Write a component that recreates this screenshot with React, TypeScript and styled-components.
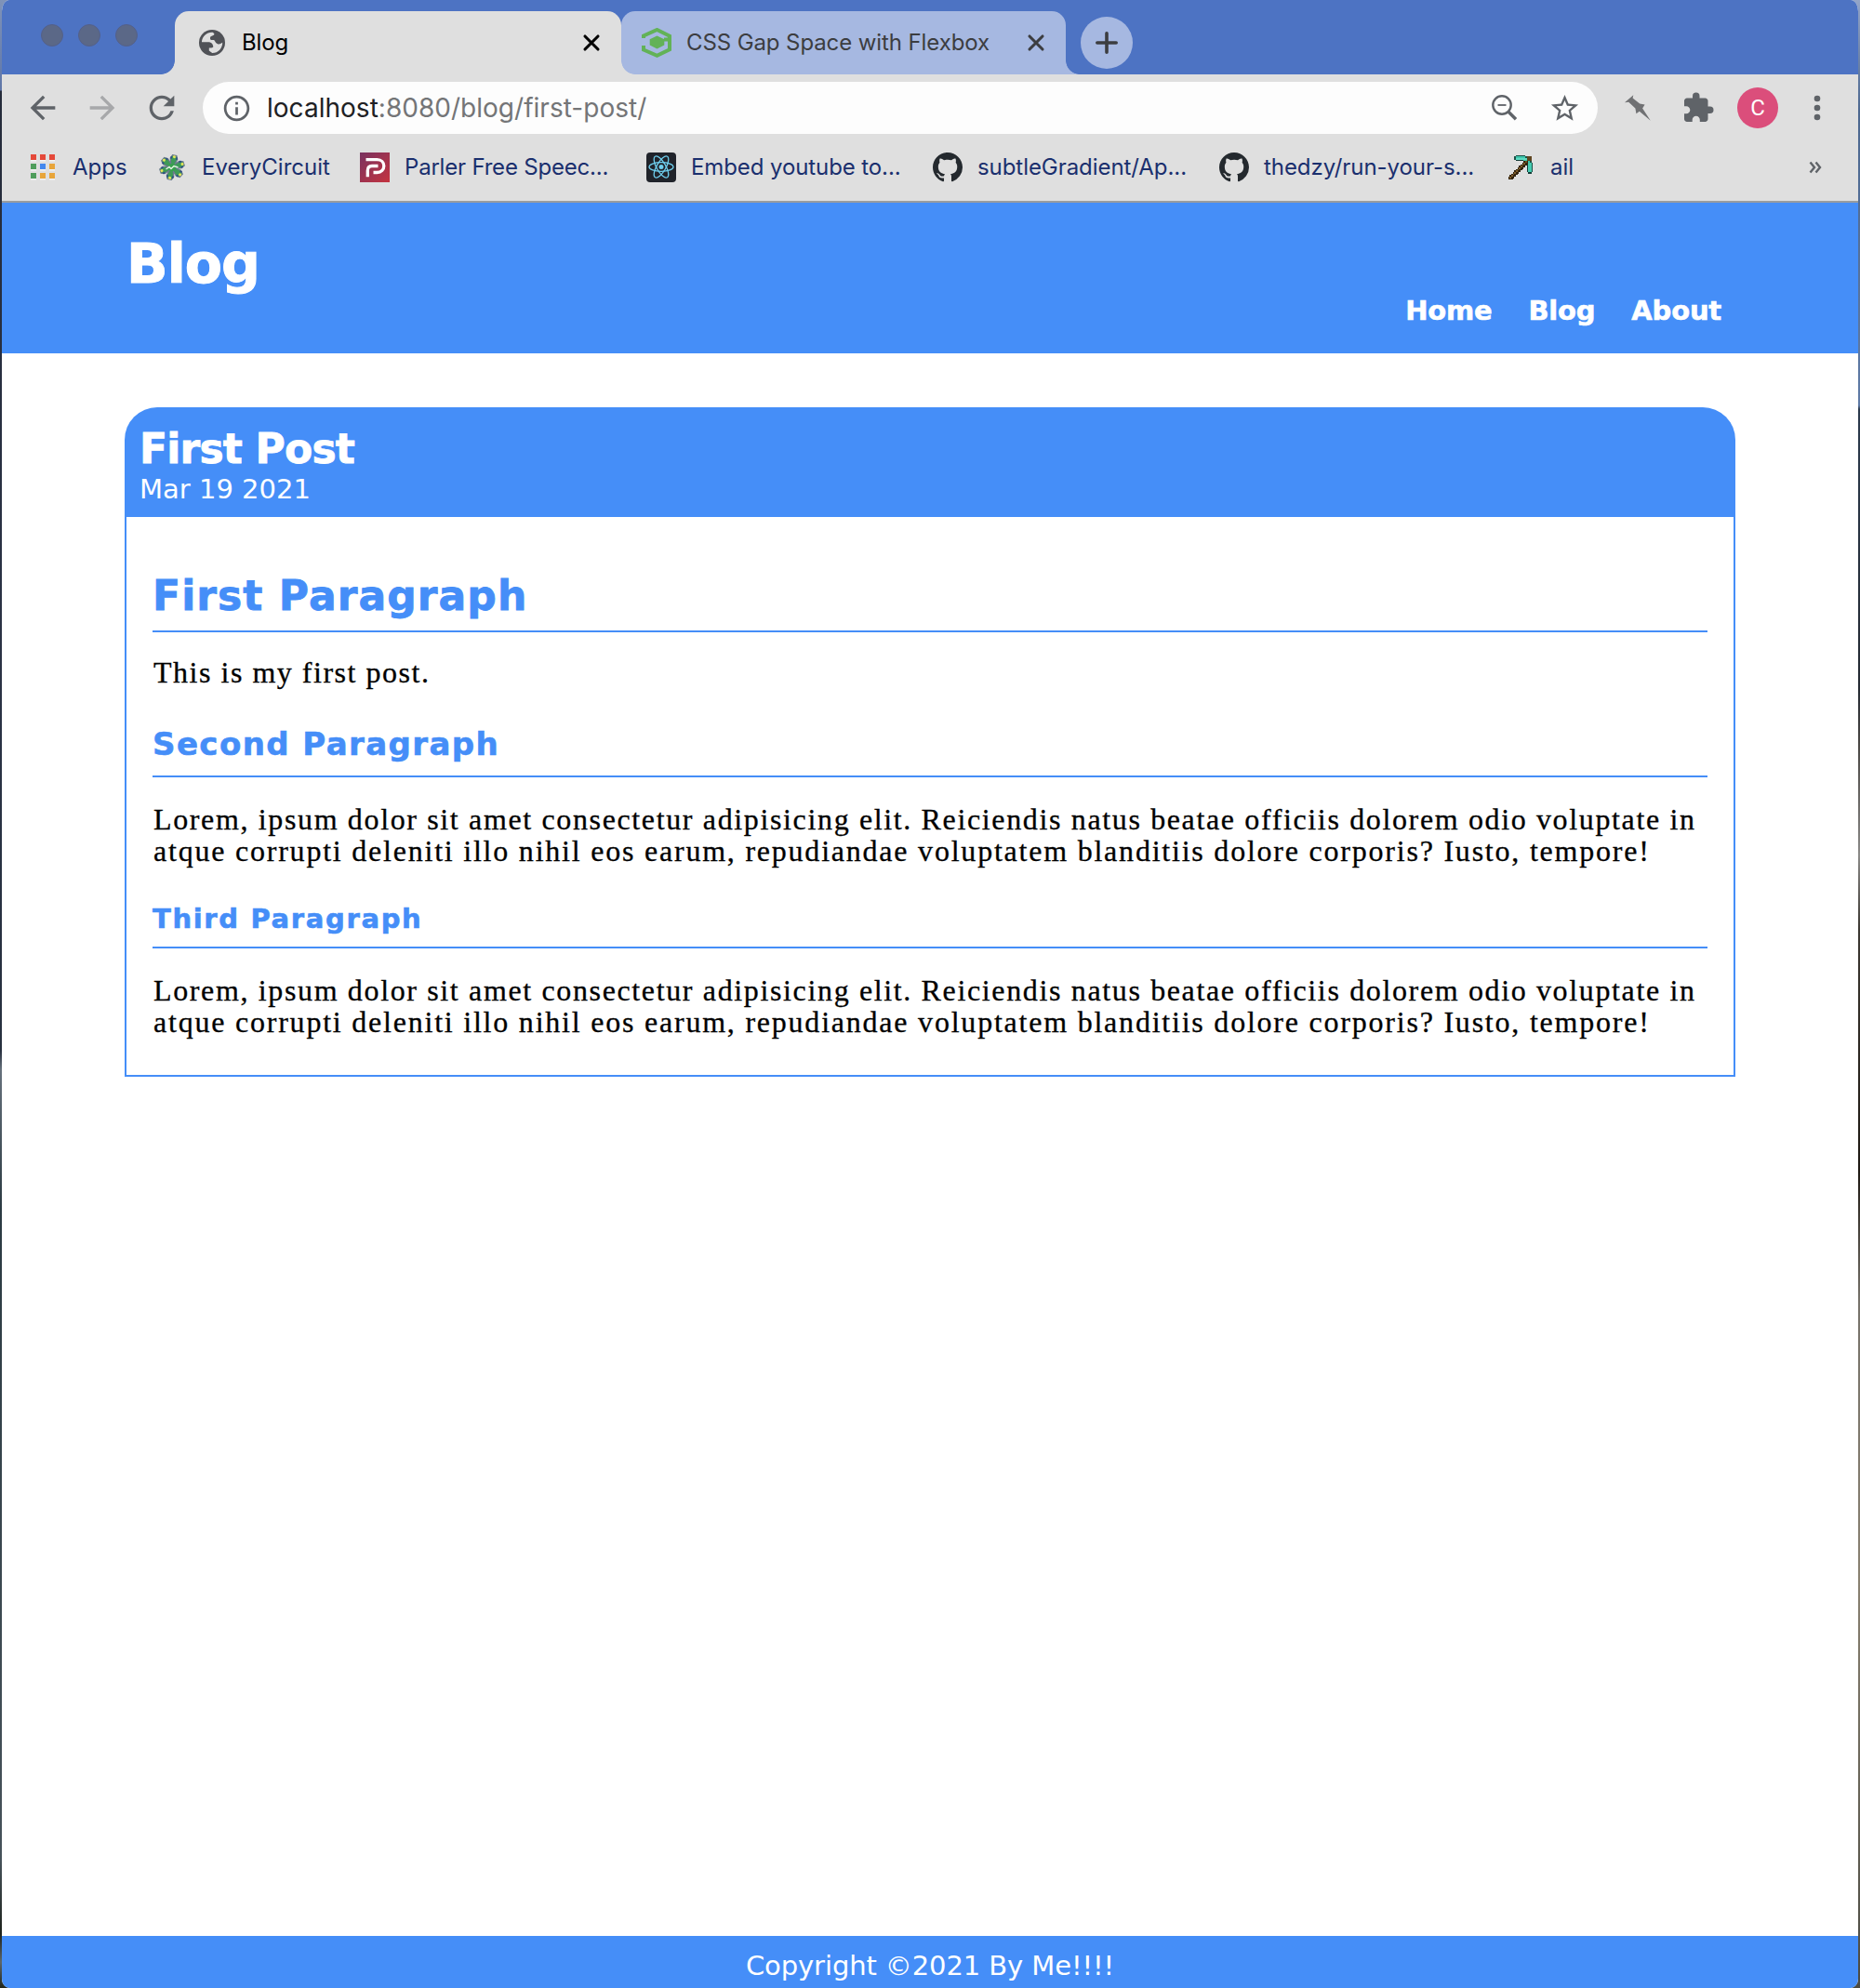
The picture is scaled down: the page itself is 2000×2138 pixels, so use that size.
import React from "react";
import styled, { createGlobalStyle, css } from "styled-components";
import {
  MdArrowBack,
  MdArrowForward,
  MdExtension,
  MdOutlineInfo,
  MdRefresh,
  MdStarBorder,
} from "react-icons/md";

const color = {
  frame: "#4d73c3",
  tabIdle: "#a6b8e1",
  chrome: "#dfdfdf",
  icon: "#5f6368",
  link: "#1a2f6e",
  blue: "#458ef8",
};

const uiFont = 'Inter, Roboto, "Liberation Sans", sans-serif';
const sansFont = '"DejaVu Sans", Verdana, sans-serif';
const serifFont = '"Liberation Serif", Georgia, serif';

const GlobalStyle = createGlobalStyle`
  * { box-sizing: border-box; }
  body { margin: 0; background: #fff; }
  h1, h2, h3, h4, p { margin: 0; }
`;

/* ---------- window ---------- */

const Desktop = styled.div`
  width: 2000px;
  height: 2138px;
  padding: 0 2px;
  overflow: hidden;
  background:
    linear-gradient(#7f93b8 0, #5f76a8 97px, #252b3a 98px, #2b3245 700px, #27303f 1130px, #66717c 1150px, #2b3a42 1300px, #46525a 2000px, #1e231d 2080px, #5e676a 2110px, #20251b 2138px) 0 0 / 50% 100% no-repeat,
    linear-gradient(#93a5c8 0, #4c678f 120px, #5f7ba6 436px, #2c3a4d 440px, #252b33 740px, #4a4744 800px, #8b8a88 920px, #3c3832 1000px, #1f1a14 1260px, #77736b 1400px, #8a8272 1700px, #4a4a42 2138px) 100% 0 / 50% 100% no-repeat;
`;

const Window = styled.div`
  display: flex;
  flex-direction: column;
  height: 100%;
  overflow: hidden;
  background: #fff;
  border-radius: 8px 8px 8px 8px / 12px 12px 10px 10px;
`;

/* ---------- tab strip ---------- */

const TabStrip = styled.div`
  display: flex;
  flex: none;
  align-items: flex-end;
  height: 80px;
  background: ${color.frame};
`;

const Lights = styled.div`
  display: flex;
  gap: 16px;
  width: 186px;
  padding: 0 0 30px 42px;
`;

const Light = styled.span`
  width: 24px;
  height: 24px;
  border: 1px solid #53608a;
  border-radius: 50%;
  background: #5b6887;
`;

const Tab = styled.div<{ $active?: boolean; $width: number }>`
  position: relative;
  z-index: ${(p) => (p.$active ? 2 : 1)};
  display: flex;
  align-items: center;
  width: ${(p) => p.$width}px;
  height: 68px;
  padding: 0 22px 0 ${(p) => (p.$active ? 26 : 22)}px;
  border-radius: 15px 15px 0 0;
  background: ${(p) => (p.$active ? color.chrome : color.tabIdle)};
  color: ${(p) => (p.$active ? "#000" : "#3c3d40")};
  font: 400 24px/32px ${uiFont};

  &::after {
    content: "";
    position: absolute;
    left: 100%;
    bottom: 0;
    width: 15px;
    height: 15px;
    background: radial-gradient(circle at 100% 0, transparent 14.5px, ${(p) => (p.$active ? color.chrome : color.tabIdle)} 15.2px);
  }

  ${(p) =>
    p.$active &&
    css`
      &::before {
        content: "";
        position: absolute;
        right: 100%;
        bottom: 0;
        width: 15px;
        height: 15px;
        background: radial-gradient(circle at 0 0, transparent 14.5px, ${color.chrome} 15.2px);
      }
    `}
`;

const TabTitle = styled.span<{ $gap: number }>`
  flex: 1;
  margin-left: ${(p) => p.$gap}px;
  letter-spacing: -0.1px;
  white-space: nowrap;
`;

const NewTab = styled.div`
  display: flex;
  align-items: center;
  justify-content: center;
  width: 56px;
  height: 56px;
  margin: 0 0 6px 16px;
  border-radius: 50%;
  background: ${color.tabIdle};
`;

/* ---------- toolbar ---------- */

const Toolbar = styled.div`
  display: flex;
  flex: none;
  align-items: center;
  height: 72px;
  padding-left: 24px;
  background: ${color.chrome};
  color: ${color.icon};
`;

const NavButtons = styled.div`
  display: flex;
  gap: 24px;
  width: 192px;
`;

const NavButton = styled.span<{ $muted?: boolean }>`
  display: flex;
  color: ${(p) => (p.$muted ? "#a7a8aa" : color.icon)};
`;

const AddressBar = styled.div`
  display: flex;
  align-items: center;
  width: 1500px;
  height: 56px;
  padding: 0 18px 0 20px;
  border-radius: 28px;
  background: #fdfdfd;
`;

const Url = styled.span`
  flex: 1;
  margin-left: 16px;
  color: #747577;
  font: 400 28px/36px ${uiFont};
  letter-spacing: 0.02px;
`;

const Host = styled.span`
  color: #202124;
`;

const AddressActions = styled.div`
  display: flex;
  align-items: center;
  gap: 33px;
`;

const Actions = styled.div`
  display: flex;
  align-items: center;
  padding-left: 28px;
`;

const PinSlot = styled.span`
  display: flex;
  width: 62px;
`;

const ExtensionSlot = styled.span`
  display: flex;
  width: 60px;
`;

const Avatar = styled.span`
  width: 44px;
  height: 44px;
  margin-right: 38px;
  border-radius: 50%;
  background: #db4e7b;
  color: #fff;
  font: 400 24px/44px Roboto, sans-serif;
  text-align: center;
`;

/* ---------- bookmarks ---------- */

const BookmarkBar = styled.div`
  display: flex;
  flex: none;
  align-items: center;
  height: 66px;
  padding: 0 39px 8px 27px;
  border-bottom: 2px solid #999c9f;
  background: ${color.chrome};
  color: ${color.link};
  font: 400 24px/32px ${uiFont};
`;

const Bookmark = styled.div<{ $width: number; $tracking?: number }>`
  display: flex;
  align-items: center;
  gap: 16px;
  width: ${(p) => p.$width}px;
  letter-spacing: ${(p) => p.$tracking ?? 0}px;
  white-space: nowrap;

  svg {
    flex: none;
  }
`;

const Overflow = styled.span`
  display: flex;
  margin-left: auto;
`;

/* ---------- blog page ---------- */

const SiteHeader = styled.header`
  display: flex;
  flex: none;
  flex-direction: column;
  height: 162px;
  padding: 33px 147px 0 134px;
  background: ${color.blue};
  color: #fff;
  font-family: ${sansFont};
`;

const SiteTitle = styled.h1`
  font-size: 58.6px;
  line-height: 66px;
  letter-spacing: -1px;
  -webkit-text-stroke: 1px currentColor;
`;

const SiteNav = styled.nav`
  display: flex;
  justify-content: flex-end;
  gap: 39px;
  font-size: 29px;
  font-weight: 700;
  line-height: 34px;
  letter-spacing: -0.2px;
  -webkit-text-stroke: 0.6px currentColor;
`;

const Main = styled.main`
  flex: 1;
  padding: 58px 132px 0;
`;

const PostHeader = styled.header`
  padding: 20px 16px 12px;
  border-radius: 35px 35px 0 0;
  background: ${color.blue};
  color: #fff;
  font-family: ${sansFont};
`;

const PostTitle = styled.h2`
  font-size: 44px;
  line-height: 50px;
  letter-spacing: -0.8px;
  -webkit-text-stroke: 0.8px currentColor;
`;

const PostDate = styled.div`
  font-size: 29px;
  line-height: 36px;
`;

const PostBody = styled.div`
  padding: 59px 28px 40px;
  border: 2px solid ${color.blue};
  border-top: 0;
`;

const sizes = {
  large: css`
    padding-bottom: 11px;
    margin-bottom: 26px;
    font-size: 44px;
    line-height: 52px;
    letter-spacing: 1.07px;
    -webkit-text-stroke: 0.8px currentColor;
  `,
  medium: css`
    padding-bottom: 14px;
    margin: 40px 0 28px;
    font-size: 34px;
    line-height: 40px;
    letter-spacing: 1.4px;
    -webkit-text-stroke: 0.6px currentColor;
  `,
  small: css`
    padding-bottom: 13px;
    margin: 39px 0 28px;
    font-size: 29px;
    line-height: 34px;
    letter-spacing: 1.66px;
    -webkit-text-stroke: 0.6px currentColor;
  `,
};

const Heading = styled.h3<{ $size: keyof typeof sizes }>`
  border-bottom: 2px solid ${color.blue};
  color: ${color.blue};
  font-family: ${sansFont};
  ${(p) => sizes[p.$size]}
`;

const Paragraph = styled.p`
  padding-left: 1px;
  color: #000;
  font: 400 32px/34px ${serifFont};
  letter-spacing: 1.52px;
  -webkit-text-stroke: 0.3px #000;
`;

const Line = styled.span<{ $tracking: number }>`
  display: block;
  letter-spacing: ${(p) => p.$tracking}px;
  white-space: nowrap;
`;

const SiteFooter = styled.footer`
  flex: none;
  height: 56px;
  padding-top: 14px;
  background: ${color.blue};
  color: #fff;
  font: 400 29px/36px ${sansFont};
  letter-spacing: -0.1px;
  text-align: center;
`;

/* ---------- icons ---------- */

const GlobeIcon = () => (
  <svg width="28" height="28" viewBox="0 0 28 28">
    <circle cx="14" cy="14" r="14" fill="#505257" />
    <path
      fill={color.chrome}
      d="M15 2.9C8.6 2.4 3.4 6.800 2.900 13.200H9.800C12.800 13.200 15.200 15 15.300 18.400C13.900 19.600 12.300 19.300 10.800 19.500V22.400L14.200 25.100C20.500 25.200 25.300 20 25.200 13.800C23.700 14.700 22.400 15.900 20.500 15.500C18.300 15 17.900 13.200 16.400 11.300C15.500 10.700 13.600 11.500 12.500 10.700C11.700 9.800 11.800 8.100 12.600 7.300C13.900 6.400 15.900 6.500 16.400 5.100C16.600 4.100 15.800 3.400 15 2.900Z"
    />
  </svg>
);

const CloseIcon = () => (
  <svg width="20" height="20" viewBox="0 0 20 20" stroke="currentColor" strokeWidth="3.1" strokeLinecap="round">
    <path d="M3 3L17 17M17 3L3 17" />
  </svg>
);

const HexIcon = () => (
  <svg width="32" height="32" viewBox="0 0 32 32" fill="none">
    <path d="M2 11V8.500L16.500 2L30 8.800V12.500H24" stroke="#62b257" strokeWidth="4" />
    <path d="M2 19V23.500L16.500 29.800L30 23.300V12" stroke="#62b257" strokeWidth="4" />
    <path d="M16.500 8.500L24.300 12.300V18.500L16.500 22.500L8.700 18.500V12.300Z" fill="#62b257" />
  </svg>
);

const PlusIcon = () => (
  <svg width="26" height="26" viewBox="0 0 26 26" stroke="#3c3d40" strokeWidth="3.6" strokeLinecap="round">
    <path d="M13 2.800V23.200M2.800 13H23.200" />
  </svg>
);

const ZoomOutIcon = () => (
  <svg width="28" height="28" viewBox="0 0 28 28" fill="none" stroke={color.icon}>
    <circle cx="11" cy="11" r="9.700" strokeWidth="2.400" />
    <path d="M6.500 11H15.500" strokeWidth="1.800" />
    <path d="M18 18.200L26 26.200" strokeWidth="3.400" />
  </svg>
);

const PinIcon = () => (
  <svg width="30" height="30" viewBox="0 0 30 30" fill="#707173">
    <path d="M10.300 1.200L9.600 4.600L17.200 10.600L22.600 11.400L20.100 15.400L28.800 28.800L16.800 18.700L13.400 21.200L12.400 15.500L5.200 8.800L1 9.300Z" />
  </svg>
);

const MoreIcon = () => (
  <svg width="8" height="28" viewBox="0 0 8 28" fill={color.icon}>
    <circle cx="4" cy="4" r="3.300" />
    <circle cx="4" cy="14" r="3.300" />
    <circle cx="4" cy="24" r="3.300" />
  </svg>
);

const appColors = ["#e5493a", "#e5493a", "#e5493a", "#4f9d5b", "#4488ee", "#e8a53a", "#4f9d5b", "#e8a53a", "#e8a53a"];

const AppsIcon = () => (
  <svg width="33" height="32" viewBox="0 0 33 32">
    {appColors.map((fill, i) => (
      <g key={i} transform={`translate(${4 + (i % 3) * 10} ${2 + Math.floor(i / 3) * 10})`}>
        <rect y="1" width="6" height="6.500" fill="#f3f3f3" />
        <rect width="6" height="6" fill={fill} />
      </g>
    ))}
  </svg>
);

const CircuitIcon = () => (
  <svg width="32" height="32" viewBox="0 0 32 32">
    {[12, 72, 132, 192, 252, 312].map((angle) => (
      <g key={angle} transform={`rotate(${angle} 16 16)`}>
        <path d="M14.500 15L12.200 6.500L13.800 2.800H18.200L19.800 6.500L17.500 15Z" fill="#3f9a58" stroke="#6b7a8c" strokeWidth="1.200" />
        <path d="M13 7V4.500M19 7V4.500" stroke="#2c4c86" strokeWidth="1.600" />
        <circle cx="16" cy="4.400" r="1.500" fill="#e9e75a" />
      </g>
    ))}
    <circle cx="16" cy="16" r="4" fill="#37a04c" />
    <path d="M9.500 18L13 15.500L15 17.500L18 14.500L22.500 16" stroke="#e3f3e4" strokeWidth="1.400" fill="none" />
  </svg>
);

const ParlerIcon = () => (
  <svg width="32" height="32" viewBox="0 0 32 32" fill="none">
    <defs>
      <linearGradient id="parler" x1="0" y1="0" x2="1" y2="1">
        <stop offset="0" stopColor="#78325f" />
        <stop offset="1" stopColor="#c5343f" />
      </linearGradient>
    </defs>
    <rect width="32" height="32" fill="url(#parler)" />
    <path d="M6.500 7.600H18.500C23 7.600 25.800 10.800 25.800 14.500S23 21.500 18.500 21.500H14.500" stroke="#fff" strokeWidth="3.300" />
    <path d="M8.300 26.300V19.500C8.300 16.400 10 14.500 13 14.500H19.500" stroke="#fff" strokeWidth="3.300" />
  </svg>
);

const ReactIcon = () => (
  <svg width="32" height="32" viewBox="0 0 32 32" fill="none">
    <rect width="32" height="32" rx="4" fill="#20232a" />
    {[0, 60, 120].map((angle) => (
      <ellipse key={angle} cx="16" cy="15.500" rx="13" ry="4.900" stroke="#6fcfee" strokeWidth="1.300" transform={`rotate(${angle} 16 15.500)`} />
    ))}
    <circle cx="16" cy="15.500" r="2.500" fill="#6fcfee" />
  </svg>
);

const GithubIcon = () => (
  <svg width="32" height="32" viewBox="0 0 16 16" fill="#24292e">
    <path d="M8 0C3.580 0 0 3.580 0 8c0 3.540 2.290 6.530 5.470 7.590.4.070.550-.170.550-.380 0-.190-.010-.820-.010-1.490-2.010.370-2.530-.490-2.690-.940-.090-.230-.480-.940-.820-1.130-.280-.150-.680-.520-.010-.530.630-.010 1.080.580 1.230.820.720 1.210 1.870.870 2.330.660.070-.520.280-.870.510-1.070-1.780-.2-3.640-.890-3.640-3.950 0-.870.310-1.590.820-2.150-.080-.2-.360-1.020.080-2.120 0 0 .670-.210 2.200.820.640-.180 1.320-.270 2-.270.680 0 1.360.090 2 .270 1.530-1.040 2.200-.820 2.200-.820.440 1.100.160 1.920.080 2.120.510.560.820 1.270.820 2.150 0 3.070-1.870 3.750-3.650 3.950.290.250.540.730.540 1.480 0 1.070-.010 1.930-.010 2.200 0 .210.150.460.550.380A8.013 8.013 0 0 0 16 8c0-4.420-3.580-8-8-8z" />
  </svg>
);

/* Pixel art on a 16 by 16 grid; each entry is x, y, width, height, fill. */
type Pixel = [number, number, number, number, string];

const pickPixels: Pixel[] = [
  [5, 0, 6, 1, "#1b5248"], [4, 1, 1, 2, "#1b5248"], [5, 1, 6, 1, "#3fc6ac"], [5, 2, 7, 1, "#5fdcc3"],
  [11, 1, 1, 1, "#1b5248"], [5, 3, 5, 1, "#153d38"], [10, 3, 3, 1, "#3fc6ac"], [12, 1, 3, 3, "#5f4620"],
  [12, 4, 2, 2, "#3fc6ac"], [14, 4, 1, 1, "#1b5248"], [13, 5, 2, 6, "#47ccb2"], [12, 6, 1, 5, "#153d38"],
  [15, 5, 1, 6, "#1b5248"], [13, 11, 2, 1, "#153d38"],
  ...Array.from({ length: 11 }, (_, i): Pixel => [10 - i, 4 + i, 3, 2, "#33240e"]),
  ...Array.from({ length: 11 }, (_, i): Pixel => [11 - i, 4 + i, 1, 1, i % 2 ? "#8a6a32" : "#6b4f22"]),
  ...Array.from({ length: 10 }, (_, i): Pixel => [10 - i, 4 + i + 1, 1, 1, "#7d5c2a"]),
];

const PickIcon = () => (
  <svg width="32" height="32" viewBox="-1.500 -1.500 19 19" shapeRendering="crispEdges">
    {pickPixels.map(([x, y, w, h, fill], i) => (
      <rect key={i} x={x} y={y} width={w} height={h} fill={fill} />
    ))}
  </svg>
);

const ChevronsIcon = () => (
  <svg width="14" height="14" viewBox="0 0 14 14" fill="none" stroke={color.icon} strokeWidth="2.400">
    <path d="M1.500 1.500L6 7L1.500 12.500M7.500 1.500L12 7L7.500 12.500" />
  </svg>
);

/* ---------- content ---------- */

const Lorem = () => (
  <Paragraph>
    <Line $tracking={1.64}>
      Lorem, ipsum dolor sit amet consectetur adipisicing elit. Reiciendis natus beatae officiis dolorem odio voluptate in
    </Line>
    <Line $tracking={1.78}>
      atque corrupti deleniti illo nihil eos earum, repudiandae voluptatem blanditiis dolore corporis? Iusto, tempore!
    </Line>
  </Paragraph>
);

export default function App() {
  return (
    <Desktop>
      <GlobalStyle />
      <Window>
        <TabStrip>
          <Lights>
            <Light />
            <Light />
            <Light />
          </Lights>
          <Tab $active $width={480}>
            <GlobeIcon />
            <TabTitle $gap={18}>Blog</TabTitle>
            <CloseIcon />
          </Tab>
          <Tab $width={478}>
            <HexIcon />
            <TabTitle $gap={16}>CSS Gap Space with Flexbox</TabTitle>
            <CloseIcon />
          </Tab>
          <NewTab>
            <PlusIcon />
          </NewTab>
        </TabStrip>

        <Toolbar>
          <NavButtons>
            <NavButton><MdArrowBack size={40} /></NavButton>
            <NavButton $muted><MdArrowForward size={40} /></NavButton>
            <NavButton><MdRefresh size={40} /></NavButton>
          </NavButtons>
          <AddressBar>
            <MdOutlineInfo size={33} />
            <Url><Host>localhost</Host>:8080/blog/first-post/</Url>
            <AddressActions>
              <ZoomOutIcon />
              <MdStarBorder size={35} />
            </AddressActions>
          </AddressBar>
          <Actions>
            <PinSlot><PinIcon /></PinSlot>
            <ExtensionSlot><MdExtension size={36} /></ExtensionSlot>
            <Avatar>C</Avatar>
            <MoreIcon />
          </Actions>
        </Toolbar>

        <BookmarkBar>
          <Bookmark $width={140}><AppsIcon />Apps</Bookmark>
          <Bookmark $width={218}><CircuitIcon />EveryCircuit</Bookmark>
          <Bookmark $width={308} $tracking={-0.2}><ParlerIcon />Parler Free Speec...</Bookmark>
          <Bookmark $width={308} $tracking={-0.1}><ReactIcon />Embed youtube to...</Bookmark>
          <Bookmark $width={308} $tracking={-0.06}><GithubIcon />subtleGradient/Ap...</Bookmark>
          <Bookmark $width={308} $tracking={-0.06}><GithubIcon />thedzy/run-your-s...</Bookmark>
          <Bookmark $width={80}><PickIcon />ail</Bookmark>
          <Overflow><ChevronsIcon /></Overflow>
        </BookmarkBar>

        <SiteHeader>
          <SiteTitle>Blog</SiteTitle>
          <SiteNav>
            <span>Home</span>
            <span>Blog</span>
            <span>About</span>
          </SiteNav>
        </SiteHeader>

        <Main>
          <article>
            <PostHeader>
              <PostTitle>First Post</PostTitle>
              <PostDate>Mar 19 2021</PostDate>
            </PostHeader>
            <PostBody>
              <Heading $size="large">First Paragraph</Heading>
              <Paragraph>This is my first post.</Paragraph>
              <Heading $size="medium">Second Paragraph</Heading>
              <Lorem />
              <Heading $size="small">Third Paragraph</Heading>
              <Lorem />
            </PostBody>
          </article>
        </Main>

        <SiteFooter>Copyright ©2021 By Me!!!!</SiteFooter>
      </Window>
    </Desktop>
  );
}
